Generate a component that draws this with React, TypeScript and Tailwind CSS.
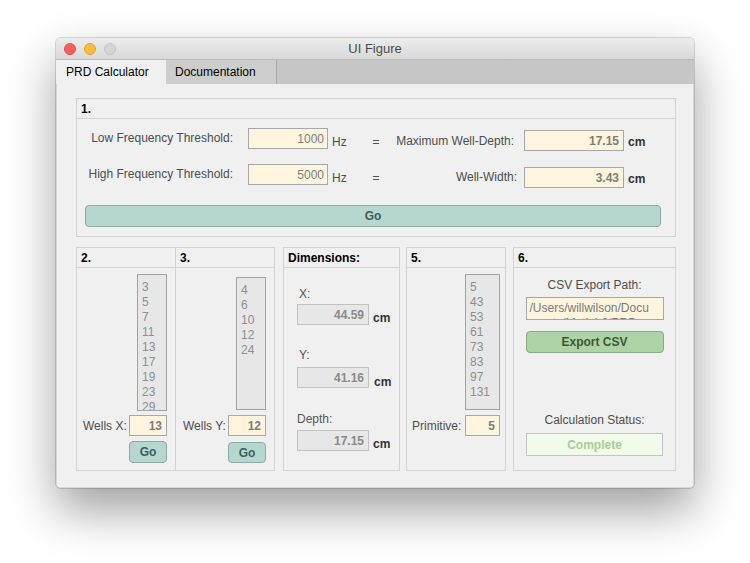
import React from "react";

const font = { fontFamily: '"Liberation Sans", Arial, Helvetica, sans-serif' };

function Panel({
  title,
  className,
  bodyClass,
  children,
}: {
  title: string;
  className: string;
  bodyClass?: string;
  children?: React.ReactNode;
}) {
  return (
    <div className={`flex flex-col border border-[#d3d3d3] bg-[#f0f0f0] ${className}`}>
      <div className="h-[20px] shrink-0 border-b border-[#d3d3d3] pl-[4px] text-[12px] font-bold leading-[20px] text-black">
        {title}
      </div>
      <div className={`flex flex-1 flex-col ${bodyClass ?? ""}`}>{children}</div>
    </div>
  );
}

function ListBox({ items, className }: { items: string[]; className: string }) {
  return (
    <div
      className={`overflow-hidden border border-[#a3a3a3] bg-[#e7e7e7] pl-[4px] pt-[5px] text-[12px] leading-[15px] text-[#8e8e8e] ${className}`}
    >
      {items.map((v) => (
        <div key={v}>{v}</div>
      ))}
    </div>
  );
}

function NumField({ value, className }: { value: string; className: string }) {
  return (
    <div
      className={`flex shrink-0 items-center justify-end border border-[#a8a8a8] bg-[#fdf5dd] pr-[4px] text-[12px] font-bold text-[#7d7d7d] ${className}`}
    >
      {value}
    </div>
  );
}

function GoButton({ className }: { className: string }) {
  return (
    <div
      className={`flex items-center justify-center rounded-[4px] border border-[#8ea8a3] bg-[#b6d7d0] text-[12px] font-bold text-[#3e5d57] ${className}`}
    >
      Go
    </div>
  );
}

function ReadField({ value }: { value: string }) {
  return (
    <div className="flex h-[21px] w-[72px] items-center justify-end border border-[#c2c2c2] bg-[#e7e7e7] pr-[4px] text-[12px] font-bold text-[#8a8a8a]">
      {value}
    </div>
  );
}

export default function App() {
  return (
    <div className="h-[563px] w-[750px] overflow-hidden bg-white pl-[56px] pt-[38px]" style={font}>
      <div className="flex h-[450px] w-[638px] flex-col overflow-hidden rounded-[5px] bg-[#f0f0f0] shadow-[0_0_0_1px_rgba(0,0,0,0.14),0_22px_48px_rgba(0,0,0,0.38)]">
        {/* title bar */}
        <div className="relative flex h-[22px] shrink-0 items-center gap-[8px] border-b border-[#b9b9b9] bg-gradient-to-b from-[#ececec] to-[#d9d9d9] pl-[8px]">
          <span className="h-[12px] w-[12px] rounded-full border border-[#de4c46] bg-[#fc605c]" />
          <span className="h-[12px] w-[12px] rounded-full border border-[#dea234] bg-[#fdbc40]" />
          <span className="h-[12px] w-[12px] rounded-full border border-[#c4c4c4] bg-[#d5d5d5]" />
          <div className="absolute inset-0 flex items-center justify-center pt-[1px] text-[13px] text-[#4a4a4a]">
            UI Figure
          </div>
        </div>

        {/* tabs */}
        <div className="flex h-[24px] shrink-0 bg-[#c6c6c6] text-[12px] text-black">
          <div className="flex w-[110px] items-center bg-[#f0f0f0] pl-[10px]">PRD Calculator</div>
          <div className="flex w-[111px] items-center border-r border-[#a9a9a9] bg-[#cdcdcd] pl-[9px]">
            Documentation
          </div>
        </div>

        {/* content */}
        <div className="flex flex-1 flex-col border-x border-b border-[#d6d6d6] pl-[19px] pt-[14px]">
          {/* panel 1 */}
          <Panel title="1." className="h-[139px] w-[600px]">
            <div className="mt-[9px] flex h-[24px] items-start text-[12px] text-[#4d4d4d]">
              <div className="h-[21px] w-[156px] text-right leading-[21px]">Low Frequency Threshold:</div>
              <div className="ml-[15px] flex h-[21px] w-[80px] items-center justify-end border border-[#a8a8a8] bg-[#fdf5dd] pr-[3px] text-[#808080]">
                1000
              </div>
              <div className="ml-[4px] mt-[4px] w-[36px] leading-[21px]">Hz</div>
              <div className="mt-[4px] w-[16px] text-center leading-[21px]">=</div>
              <div className="mt-[3px] w-[130px] text-right leading-[21px]">Maximum Well-Depth:</div>
              <NumField value="17.15" className="ml-[10px] mt-[2px] h-[21px] w-[100px]" />
              <div className="ml-[4px] mt-[4px] font-bold leading-[21px] text-[#333]">cm</div>
            </div>
            <div className="mt-[12px] flex h-[24px] items-start text-[12px] text-[#4d4d4d]">
              <div className="h-[21px] w-[156px] text-right leading-[21px]">High Frequency Threshold:</div>
              <div className="ml-[15px] flex h-[21px] w-[80px] items-center justify-end border border-[#a8a8a8] bg-[#fdf5dd] pr-[3px] text-[#808080]">
                5000
              </div>
              <div className="ml-[4px] mt-[4px] w-[36px] leading-[21px]">Hz</div>
              <div className="mt-[4px] w-[16px] text-center leading-[21px]">=</div>
              <div className="mt-[3px] w-[133px] text-right leading-[21px]">Well-Width:</div>
              <NumField value="3.43" className="ml-[7px] mt-[3px] h-[21px] w-[100px]" />
              <div className="ml-[4px] mt-[5px] font-bold leading-[21px] text-[#333]">cm</div>
            </div>
            <GoButton className="ml-[8px] mt-[17px] h-[22px] w-[576px]" />
          </Panel>

          {/* lower panels */}
          <div className="mt-[10px] flex">
            <Panel title="2." className="h-[224px] w-[100px]" bodyClass="items-end pr-[8px]">
              <ListBox
                items={["3", "5", "7", "11", "13", "17", "19", "23", "29"]}
                className="mt-[6px] h-[137px] w-[30px]"
              />
              <div className="mt-[4px] flex w-full items-center justify-between pl-[6px] text-[12px] text-[#4d4d4d]">
                <span>Wells X:</span>
                <NumField value="13" className="h-[21px] w-[38px]" />
              </div>
              <GoButton className="mt-[5px] h-[22px] w-[38px]" />
            </Panel>
            <Panel title="3." className="h-[224px] w-[99px] border-l-0" bodyClass="items-end pr-[8px]">
              <ListBox items={["4", "6", "10", "12", "24"]} className="mt-[9px] h-[133px] w-[30px]" />
              <div className="mt-[5px] flex w-full items-center justify-between pl-[7px] text-[12px] text-[#4d4d4d]">
                <span>Wells Y:</span>
                <NumField value="12" className="h-[21px] w-[38px]" />
              </div>
              <GoButton className="mt-[6px] h-[21px] w-[38px]" />
            </Panel>

            <Panel title="Dimensions:" className="ml-[8px] h-[224px] w-[117px]" bodyClass="pl-[13px]">
              <div className="mt-[19px] pl-[2px] text-[12px] leading-[15px] text-[#555]">X:</div>
              <div className="mt-[2px] flex items-start">
                <ReadField value="44.59" />
                <span className="ml-[4px] mt-[5px] text-[12px] font-bold text-[#333]">cm</span>
              </div>
              <div className="mt-[21px] pl-[2px] text-[12px] leading-[15px] text-[#555]">Y:</div>
              <div className="mt-[4px] flex items-start">
                <ReadField value="41.16" />
                <span className="ml-[5px] mt-[6px] text-[12px] font-bold text-[#333]">cm</span>
              </div>
              <div className="mt-[21px] text-[12px] leading-[15px] text-[#555]">Depth:</div>
              <div className="mt-[3px] flex items-start">
                <ReadField value="17.15" />
                <span className="ml-[4px] mt-[5px] text-[12px] font-bold text-[#333]">cm</span>
              </div>
            </Panel>

            <Panel title="5." className="ml-[6px] h-[224px] w-[100px]" bodyClass="items-end pr-[5px]">
              <ListBox
                items={["5", "43", "53", "61", "73", "83", "97", "131"]}
                className="mt-[6px] h-[136px] w-[35px]"
              />
              <div className="mt-[5px] flex w-full items-center justify-between pl-[5px] text-[12px] text-[#4d4d4d]">
                <span>Primitive:</span>
                <NumField value="5" className="h-[21px] w-[35px]" />
              </div>
            </Panel>

            <Panel title="6." className="ml-[7px] h-[224px] w-[163px]" bodyClass="items-center">
              <div className="mt-[10px] text-[12px] leading-[15px] text-[#4d4d4d]">CSV Export Path:</div>
              <div className="mt-[4px] h-[23px] w-[138px] overflow-hidden break-all border border-[#a8a8a8] bg-[#fdf5dd] pl-[3px] pr-[6px] pt-[3px] text-[12px] leading-[15px] text-[#7a7a7a]">
                /Users/willwilson/Documents/Matlab2/PRD
              </div>
              <div className="mt-[11px] flex h-[22px] w-[138px] items-center justify-center rounded-[4px] border border-[#8aa882] bg-[#aed3a5] text-[12px] font-bold text-[#3a5a33]">
                Export CSV
              </div>
              <div className="mt-[60px] text-[12px] leading-[15px] text-[#4d4d4d]">Calculation Status:</div>
              <div className="mt-[5px] flex h-[23px] w-[137px] items-center justify-center border border-[#c4c4c4] bg-[#f0fbe9] text-[12px] font-bold text-[#aacb98]">
                Complete
              </div>
            </Panel>
          </div>
        </div>
      </div>
    </div>
  );
}
